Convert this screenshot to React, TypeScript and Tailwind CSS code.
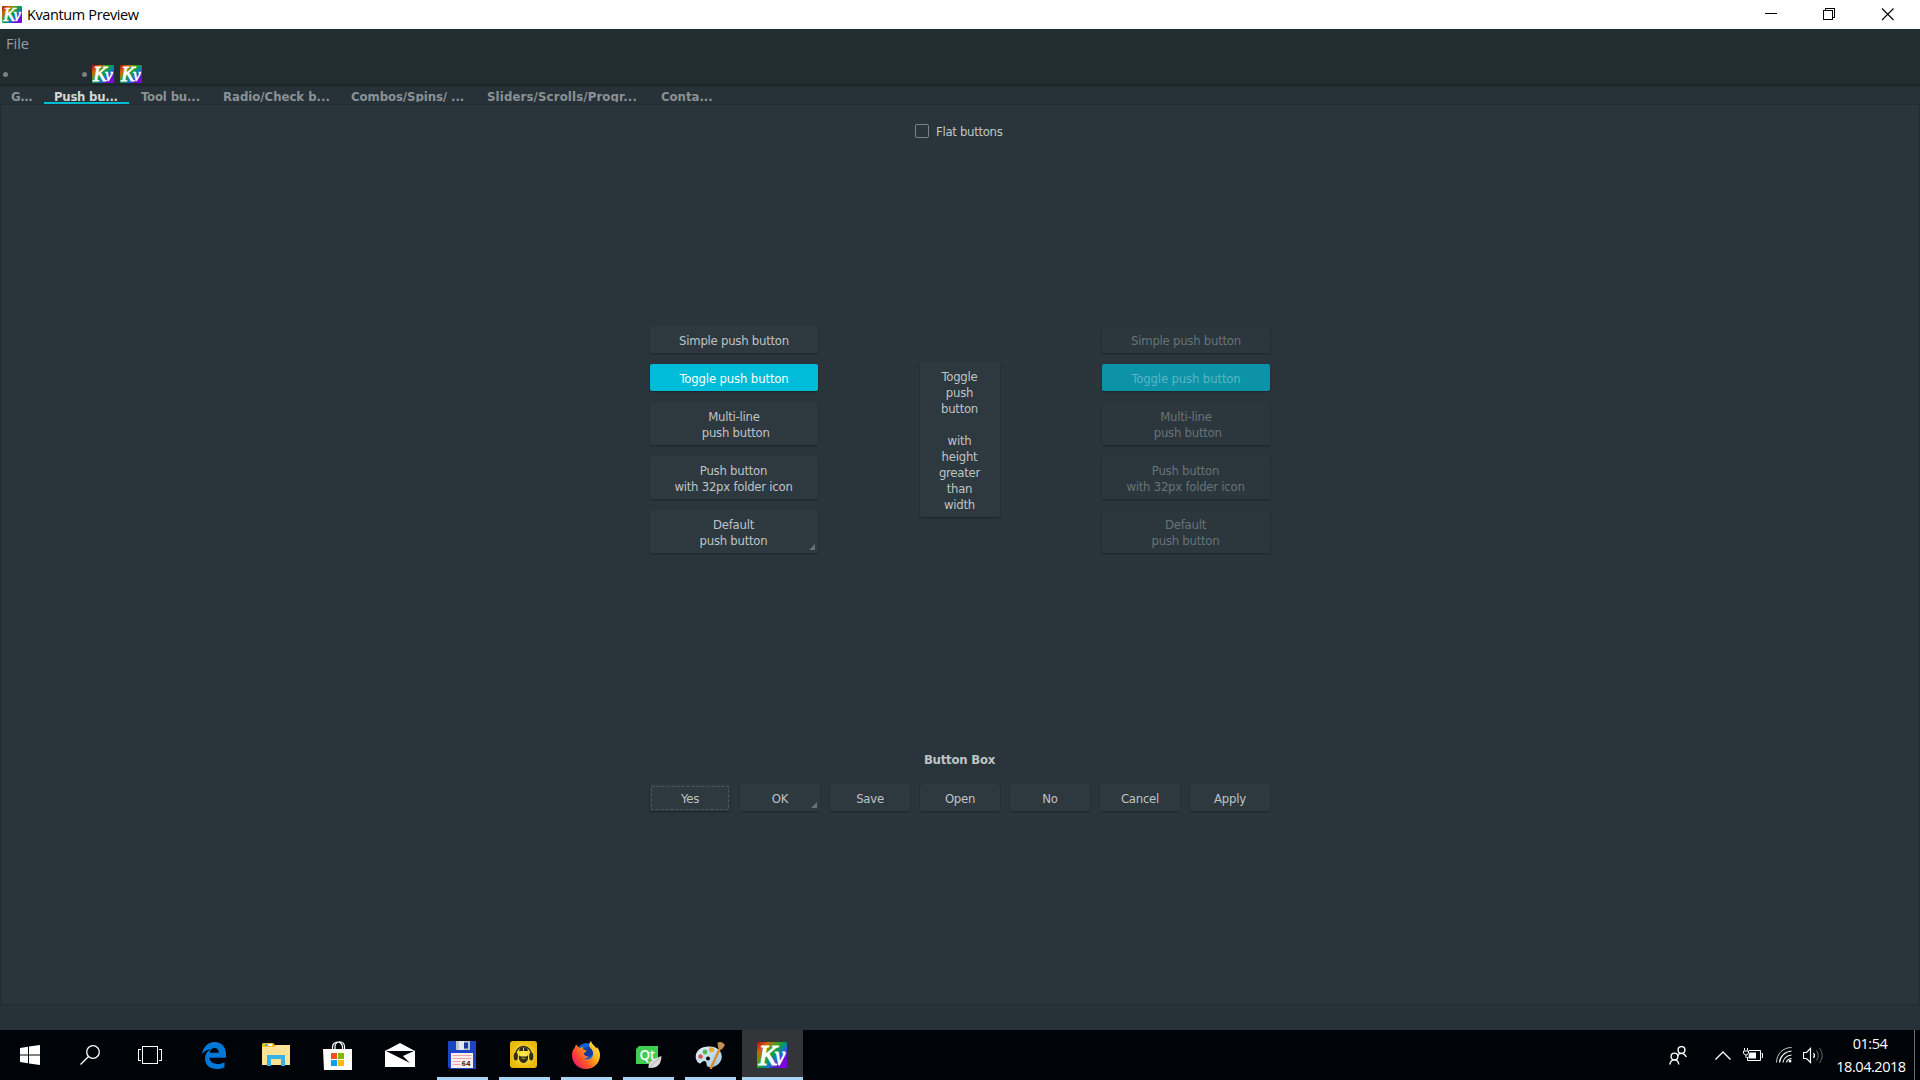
import React from "react";

const UI = "font-['DejaVu_Sans_Condensed','DejaVu_Sans',sans-serif]";
const SEGOE = "font-['Open_Sans','Noto_Sans',sans-serif]";

function KvIcon({ id, className }: { id: string; className: string }) {
  return (
    <svg viewBox="0 0 30 26" preserveAspectRatio="none" className={`shrink-0 overflow-visible ${className}`}>
      <defs>
        <linearGradient id={id} x1="0" y1="0.1" x2="1" y2="0.9">
          <stop offset="0" stopColor="#b8200a" />
          <stop offset="0.18" stopColor="#d8600c" />
          <stop offset="0.34" stopColor="#5c9a10" />
          <stop offset="0.5" stopColor="#08a04a" />
          <stop offset="0.64" stopColor="#1478c8" />
          <stop offset="0.8" stopColor="#5a14d8" />
          <stop offset="1" stopColor="#8a00e0" />
        </linearGradient>
      </defs>
      <rect width="30" height="26" rx="1.5" fill={`url(#${id})`} />
      <g fill="#fff" stroke="#fff" fontFamily="Liberation Serif, serif" fontStyle="italic">
        <text x="1.8" y="22.5" fontSize="29" strokeWidth="1.1" textLength="18.5" lengthAdjust="spacingAndGlyphs">K</text>
        <text x="17.800" y="22.5" fontSize="28" strokeWidth="0.9" textLength="10.5" lengthAdjust="spacingAndGlyphs">v</text>
      </g>
    </svg>
  );
}

function TitleBar() {
  return (
    <header className={`flex h-[29px] shrink-0 items-center bg-white text-black ${SEGOE}`}>
      <KvIcon id="kv-title" className="ml-[2px] mt-[-1px] h-[17px] w-5" />
      <span className="ml-[5px] text-[14.5px] leading-[29px] tracking-[-0.38px]">Kvantum Preview</span>
      <svg className="ml-auto mr-[26px] h-[13px] w-[130px]" viewBox="0 0 130 13" fill="none" stroke="#000" shapeRendering="crispEdges">
        <path d="M1 5.5h12" />
        <path d="M59.500 2.500h9v9h-9zM61.500 2.500v-2h9v9h-2" />
        <path d="M118 0.500l11.500 11.500M129.500 0.500L118 12" shapeRendering="auto" strokeWidth="1.1" />
      </svg>
    </header>
  );
}

function Toolbar() {
  return (
    <div className="z-10 flex h-[56px] shrink-0 flex-col border-b border-[#1b2326] bg-[#222d32] shadow-[0_1px_2px_rgba(0,0,0,0.25)]">
      <div className={`h-[30px] pl-[6px] text-[14.5px] leading-[29px] text-[#9a9fa1] ${SEGOE}`}>File</div>
      <div className="flex h-[25px] items-center pl-[3px]">
        <span className="mt-[5px] size-[5px] rounded-full bg-[#7c8182]" />
        <span className="ml-[74px] mt-[5px] size-[5px] rounded-full bg-[#7c8182]" />
        <KvIcon id="kv-tool-a" className="ml-[5px] mt-[4px] h-[18px] w-[22px]" />
        <KvIcon id="kv-tool-b" className="ml-[6px] mt-[4px] h-[18px] w-[22px]" />
      </div>
    </div>
  );
}

const tabs = [
  { label: "G...", box: "w-[44px] pl-[11px] tracking-[-0.4px]" },
  { label: "Push bu...", box: "w-[85px] pl-[10px] tracking-[-0.25px]", active: true },
  { label: "Tool bu...", box: "w-[82px] pl-[12px] tracking-[-0.15px]" },
  { label: "Radio/Check b...", box: "w-[128px] pl-[12px]" },
  { label: "Combos/Spins/ ...", box: "w-[136px] pl-[12px] tracking-[-0.06px]" },
  { label: "Sliders/Scrolls/Progr...", box: "w-[174px] pl-[12px] tracking-[0.16px]" },
  { label: "Conta...", box: "w-[80px] pl-[12px]" },
];

function Tabs() {
  return (
    <nav className={`flex h-[19px] shrink-0 bg-[#263238] text-[13px] font-bold ${UI}`}>
      {tabs.map((t) => (
        <div
          key={t.label}
          className={`h-[19px] overflow-hidden whitespace-nowrap leading-[24px] ${t.box} ${
            t.active ? "border-b-2 border-[#00bcd4] text-[#d3d6d7]" : "border-b-2 border-transparent text-[#8b9194]"
          }`}
        >
          {t.label}
        </div>
      ))}
    </nav>
  );
}

function Corner() {
  return (
    <svg className="absolute bottom-[3px] right-[3px] size-[6px]" viewBox="0 0 6 6">
      <path d="M6 0v6H0z" fill="#667075" />
    </svg>
  );
}

type BtnProps = { lines: string[]; on?: boolean; disabled?: boolean; corner?: boolean; focus?: boolean; size: string };

function PushButton({ lines, on, disabled, corner, focus, size }: BtnProps) {
  const look = on
    ? disabled
      ? "bg-[#0d93a7] text-[#5bb3c0] tracking-[-0.14px]"
      : "bg-[#00bcd9] text-white tracking-[-0.14px]"
    : disabled
      ? "bg-[#2b373d] text-[#697276] tracking-[-0.25px]"
      : "bg-[#2e393f] text-[#bfc3c5] tracking-[-0.25px]";
  return (
    <button
      className={`relative flex flex-col items-center justify-center rounded-[2px] pt-[2px] text-[13px] leading-4 shadow-[0_1px_2px_rgba(0,0,0,0.32)] ${look} ${size}`}
    >
      {lines.map((l, i) => (
        <span key={i} className="h-4 whitespace-pre">
          {l}
        </span>
      ))}
      {corner && <Corner />}
      {focus && (
        <svg className="absolute inset-0 h-full w-full" viewBox="0 0 80 27" fill="none">
          <rect x="1.500" y="2.500" width="77" height="23" stroke="#4e595e" strokeDasharray="3 2" />
        </svg>
      )}
    </button>
  );
}

function ButtonColumn({ disabled }: { disabled?: boolean }) {
  return (
    <div className="flex w-[168px] flex-col gap-[11px]">
      <PushButton lines={["Simple push button"]} disabled={disabled} size="h-[27px]" />
      <PushButton lines={["Toggle push button"]} disabled={disabled} on size="h-[27px]" />
      <PushButton lines={["Multi-line", " push button"]} disabled={disabled} size="h-[43px]" />
      <PushButton lines={["Push button", "with 32px folder icon"]} disabled={disabled} size="h-[43px] pr-px" />
      <PushButton lines={["Default", "push button"]} disabled={disabled} corner={!disabled} size="h-[43px] pr-px" />
    </div>
  );
}

const boxButtons = ["Yes", "OK", "Save", "Open", "No", "Cancel", "Apply"];

function Content() {
  return (
    <main className={`flex h-[901px] shrink-0 flex-col items-center border border-[#222b2f] bg-[#29353b] ${UI}`}>
      <label className="mt-[16px] flex h-5 w-[90px] items-center text-[13px] tracking-[-0.3px] text-[#c3c7c8]">
        <span className="size-[14px] shrink-0 rounded-[2px] border border-[#788184]" />
        <span className="ml-[7px] mt-px whitespace-nowrap">Flat buttons</span>
      </label>
      <div className="mt-[185px] flex h-[227px] w-[620px] items-center justify-between">
        <ButtonColumn />
        <PushButton
          lines={["Toggle", "push", "button", "", "with", "height", "greater", "than", "width"]}
          size="h-[155px] w-20 pr-px"
        />
        <ButtonColumn disabled />
      </div>
      <h2 className="mt-[197px] h-5 pr-px text-[13px] font-bold leading-5 tracking-[-0.22px] text-[#bfc3c5]">Button Box</h2>
      <div className="mt-[14px] flex gap-[10px]">
        {boxButtons.map((b) => (
          <PushButton key={b} lines={[b]} size="h-[27px] w-20" corner={b === "OK"} focus={b === "Yes"} />
        ))}
      </div>
    </main>
  );
}

const EdgeIcon = () => (
  <svg viewBox="0 0 24 27" className="h-[27px] w-6">
    <path
      fill="#0078d7"
      d="M0 12C1 5 6 0 12.500 0C20 0 24 5.500 24 12v3.800H7.500C7.800 20 11.500 22 15.500 22c2.800 0 5-.7 7-1.800v5C20.500 26.300 18 27 15 27C8 27 3 23 3 16.500C3 12.500 5 9 8.800 7.200C5 7.500 2 9.500 0 12zM7.700 10.800h9C16.700 8 15.500 6 12.500 6C10 6 8.200 8 7.700 10.800z"
    />
  </svg>
);

const FolderIcon = () => (
  <svg viewBox="0 0 28 24" className="h-6 w-7">
    <path d="M0 1.500Q0 0 1.500 0H11l2.500 2.500H28V6H0z" fill="#f4bd2d" />
    <path d="M3 1h7v2H3z" fill="#fff" />
    <path d="M3 1h3v2H3z" fill="#54b8a0" />
    <path d="M0 4h12l2-2h14v20H0z" fill="#ffe296" />
    <path d="M5 12h18v11h-4v-7H9v7H5z" fill="#36b3e6" />
  </svg>
);

const StoreIcon = () => (
  <svg viewBox="0 0 29 29" className="mr-[2px] size-[29px]">
    <path d="M9.500 9V6a5 5 0 0 1 10 0v3M12 9V5.500a4.500 4.500 0 0 1 9.500 0V9" fill="none" stroke="#fff" strokeWidth="1.200" />
    <path d="M0 8h29v21H1z" fill="#fff" />
    <path d="M8 12h6v6H8z" fill="#f25022" />
    <path d="M15 12h6v6h-6z" fill="#7fba00" />
    <path d="M8 19h6v6H8z" fill="#00a4ef" />
    <path d="M15 19h6v6h-6z" fill="#ffb900" />
  </svg>
);

const MailIcon = () => (
  <svg viewBox="0 0 30 24" className="h-6 w-[30px]">
    <path d="M0 8L15 0l15 8v16H0z" fill="#fff" />
    <path d="M1 8h28l-11 5 7 7z" fill="#000307" />
  </svg>
);

const FloppyIcon = () => (
  <svg viewBox="0 0 28 28" className="size-7">
    <path d="M0 0h28v28H2l-2-2z" fill="#1c45c4" />
    <path d="M8 0h14v9H8z" fill="#bcc4cc" />
    <path d="M11 0h5v9h-5z" fill="#e4e8ec" />
    <path d="M16 1.500h4v6h-4z" fill="#173a9f" />
    <path d="M3 12h22v15H3z" fill="#f7eeee" />
    <path d="M4.500 14.500h19M4.500 17.500h19M4.500 20.500h8M4.500 23.500h8" stroke="#eea5a8" strokeWidth="1.200" />
    <text x="13.500" y="25" fontSize="7.500" fontWeight="bold" fontFamily="Liberation Mono, monospace" fill="#222">64</text>
  </svg>
);

const HeadphonesIcon = () => (
  <svg viewBox="0 0 27 27" className="mr-[2px] mt-[-1px] size-[27px]">
    <defs>
      <radialGradient id="yellow-tile">
        <stop offset="0" stopColor="#fff05a" />
        <stop offset="1" stopColor="#e9b90c" />
      </radialGradient>
    </defs>
    <rect width="27" height="27" rx="3" fill="url(#yellow-tile)" />
    <path d="M5.500 14a8 8.500 0 0 1 16 0" fill="none" stroke="#2f2d1e" strokeWidth="1.300" />
    <path d="M9 10Q9.500 6 13.500 6T18 10zM9 14.500l2 1h5l2-1v3.500q-1.500 4-4.500 4t-4.500-4z" fill="#2f2d1e" />
    <path d="M13.500 6.500v3.500" stroke="#e9cf30" />
    <ellipse cx="5.800" cy="15.500" rx="2.100" ry="4" fill="#2f2d1e" />
    <ellipse cx="21.200" cy="15.500" rx="2.100" ry="4" fill="#2f2d1e" />
    <path d="M11.500 17.300h4" stroke="#d9c030" strokeWidth="0.800" />
  </svg>
);

const FirefoxIcon = () => (
  <svg viewBox="0 0 28 28" className="size-7">
    <defs>
      <linearGradient id="fx" x1="1" y1="0.100" x2="0.100" y2="0.800">
        <stop offset="0" stopColor="#fff04a" />
        <stop offset="0.400" stopColor="#ffb01c" />
        <stop offset="0.700" stopColor="#ff5a26" />
        <stop offset="1" stopColor="#f0205c" />
      </linearGradient>
    </defs>
    <circle cx="14" cy="11" r="9" fill="#0a62d6" />
    <circle cx="16" cy="11" r="5" fill="#123a9c" />
    <path
      fill="url(#fx)"
      d="M19 0c-2 2-2.500 4-1 6.500C21 9 22 12 20.500 15.500c-2 3-6 4-8.500 2 2 .2 3.500-.8 4.500-2-1.500 0-3.500-.5-5-2.500l2-2.200 1.500-1-4-1.300L11 6 7.500 7 4 3.500 2.500 7C1 8.500 0 11 0 14.500 0 22 6 28 14 28s14-6 14-14c0-3.500-1.500-6-3-8l-.5 1.500C23 5 19.500 3 19 0z"
    />
  </svg>
);

const QtIcon = () => (
  <svg viewBox="0 0 26 23" className="ml-px mt-[4px] h-[23px] w-[26px]">
    <path d="M3 0h19v18H0V3z" fill="#41cd52" />
    <text x="3.500" y="13.500" fontSize="13.500" fontFamily="Open Sans, sans-serif" fontWeight="600" fill="#fff" textLength="15.500">Qt</text>
    <path d="M25.500 10C25 18 22 22.500 12.500 22C12 16 16 13.500 25.500 10z" fill="#dcdcdc" />
    <path d="M25 10.500L13 22" stroke="#999" strokeWidth="0.700" />
  </svg>
);

const PaintIcon = () => (
  <svg viewBox="0 0 30 28" className="h-7 w-[30px]">
    <defs>
      <linearGradient id="palette" x1="0" y1="0" x2="1" y2="1">
        <stop offset="0" stopColor="#eaf5fb" />
        <stop offset="1" stopColor="#9cc6dd" />
      </linearGradient>
    </defs>
    <path d="M1 18C-1 10 7 4.500 15 5.500C24 6 28 12 26.500 18C25 24 18 27 14 26C10 25.500 13 20.500 9.500 20C7 19.500 6 23 4.500 22.500Q2 21.500 1 18z" fill="url(#palette)" />
    <circle cx="13" cy="17.500" r="2" fill="#05080c" />
    <circle cx="5.500" cy="15.500" r="2.300" fill="#d9534d" />
    <circle cx="10" cy="11" r="2.400" fill="#5ab55a" />
    <circle cx="16.500" cy="8.800" r="2.600" fill="#f0a82a" />
    <path d="M25.500 6L16 27" stroke="#d68c35" strokeWidth="2.500" strokeLinecap="round" />
    <path d="M22.500 1.500Q27-.5 30 4l-3 4.500-4-2z" fill="#c09058" />
  </svg>
);

const apps: { icon: React.ReactNode; running?: boolean; active?: boolean }[] = [
  { icon: <EdgeIcon /> },
  { icon: <FolderIcon /> },
  { icon: <StoreIcon /> },
  { icon: <MailIcon /> },
  { icon: <FloppyIcon />, running: true },
  { icon: <HeadphonesIcon />, running: true },
  { icon: <FirefoxIcon />, running: true },
  { icon: <QtIcon />, running: true },
  { icon: <PaintIcon />, running: true },
  { icon: <KvIcon id="kv-task" className="mr-px h-[26px] w-[30px]" />, running: true, active: true },
];

function Taskbar() {
  return (
    <footer className={`flex h-[50px] shrink-0 bg-[#000307] text-white ${SEGOE}`}>
      <div className="flex w-[60px] items-center justify-center">
        <svg viewBox="0 0 20 20" className="size-5" fill="#fff">
          <path d="M0 3l8-1.200V9.500H0zM9 1.600L20 0v9.500H9zM0 10.500h8v7.700L0 17zM9 10.500h11V20L9 18.400z" />
        </svg>
      </div>
      <div className="flex w-[60px] items-center justify-center">
        <svg viewBox="0 0 20 20" className="size-5" fill="none" stroke="#fff" strokeWidth="1.300">
          <circle cx="13" cy="7" r="6.300" />
          <path d="M8.500 11.500L0.500 19.500" />
        </svg>
      </div>
      <div className="flex w-[60px] items-center justify-center">
        <svg viewBox="0 0 24 18" className="h-[18px] w-6" fill="none" stroke="#fff" shapeRendering="crispEdges">
          <path d="M4.500 0.500h15v17h-15zM3 3.500H0.500v11H3M21 3.500h2.500v11H21" />
        </svg>
      </div>
      <div className="ml-[3px] flex">
        {apps.map((a, i) => (
          <div
            key={i}
            className={`flex h-[50px] flex-col items-center ${a.active ? "ml-px w-[61px] bg-[#333538]" : "w-[62px]"}`}
          >
            <div className="flex h-[47px] items-center pt-[3px]">{a.icon}</div>
            {a.running && <div className={`h-[3px] bg-[#a9d6f7] ${a.active ? "w-full" : "w-[51px]"}`} />}
          </div>
        ))}
      </div>
      <div className="ml-auto flex items-center">
        <svg viewBox="0 0 18 19" className="h-[19px] w-[18px]" fill="none" stroke="#fff" strokeWidth="1.400">
          <circle cx="12.500" cy="4" r="3.400" />
          <path d="M8.500 10q1-2.600 4-2.600t4.800 3.600" />
          <circle cx="5.500" cy="10.500" r="3.400" />
          <path d="M0.700 18.500q1-4.600 4.800-4.600t4.300 4.600" />
        </svg>
        <svg viewBox="0 0 16 9" className="ml-[28px] h-[9px] w-4" fill="none" stroke="#fff" strokeWidth="1.300">
          <path d="M0.500 8.500L8 1l7.500 7.500" />
        </svg>
        <svg viewBox="0 0 20 14" className="ml-3 h-[14px] w-5" fill="none" stroke="#fff">
          <path d="M6 2.500h11.500v10H4.500V9M18.500 5.500h1v4h-1" />
          <path d="M6.500 4.500H13v6H5.500V8z" fill="#fff" stroke="none" />
          <path d="M1.500 0v2.500M4.500 0v2.500M0.500 3h5v2q-.5 2-2.500 2t-2.500-2zM3 7v3" />
        </svg>
        <svg viewBox="0 0 16 16" className="ml-[13px] size-4" fill="none" stroke="#fff">
          <path d="M0.500 15.500C0.500 7 7 0.500 15.500 0.500" stroke="#c8c8c8" />
          <path d="M3.500 15.500C4 9.500 9 4.500 15.500 4M7 15.500c.5-4 4-7 8.500-7.500M10.500 15.500c.3-2 2.500-3.800 5-4" strokeWidth="1.200" />
          <circle cx="14" cy="14" r="1.500" fill="#fff" stroke="none" />
        </svg>
        <svg viewBox="0 0 21 17" className="ml-[11px] h-[17px] w-[21px]" fill="none" stroke="#fff">
          <path d="M0.500 5.500h3l4-4v14l-4-4h-3z" strokeWidth="1.200" />
          <path d="M10.500 6q2 2.500 0 5" strokeWidth="1.200" />
          <path d="M13.500 3.500q3.500 5 0 10M16.500 1q5.500 7.500 0 15" stroke="#666a6d" />
        </svg>
        <div className="ml-[7px] mt-[-1px] w-[80px] whitespace-nowrap text-center text-[14.5px] leading-[23px] tracking-[-0.45px]">
          <div className="pr-[2px]">01:54</div>
          <div>18.04.2018</div>
        </div>
        <div className="ml-[3px] mr-[5px] h-[50px] w-px bg-[#6b6e70]" />
      </div>
    </footer>
  );
}

export default function App() {
  return (
    <div className="flex h-[1080px] w-[1920px] flex-col overflow-hidden bg-[#263238]">
      <TitleBar />
      <Toolbar />
      <Tabs />
      <Content />
      <div className="h-[25px] shrink-0 bg-[#263238]" />
      <Taskbar />
    </div>
  );
}
